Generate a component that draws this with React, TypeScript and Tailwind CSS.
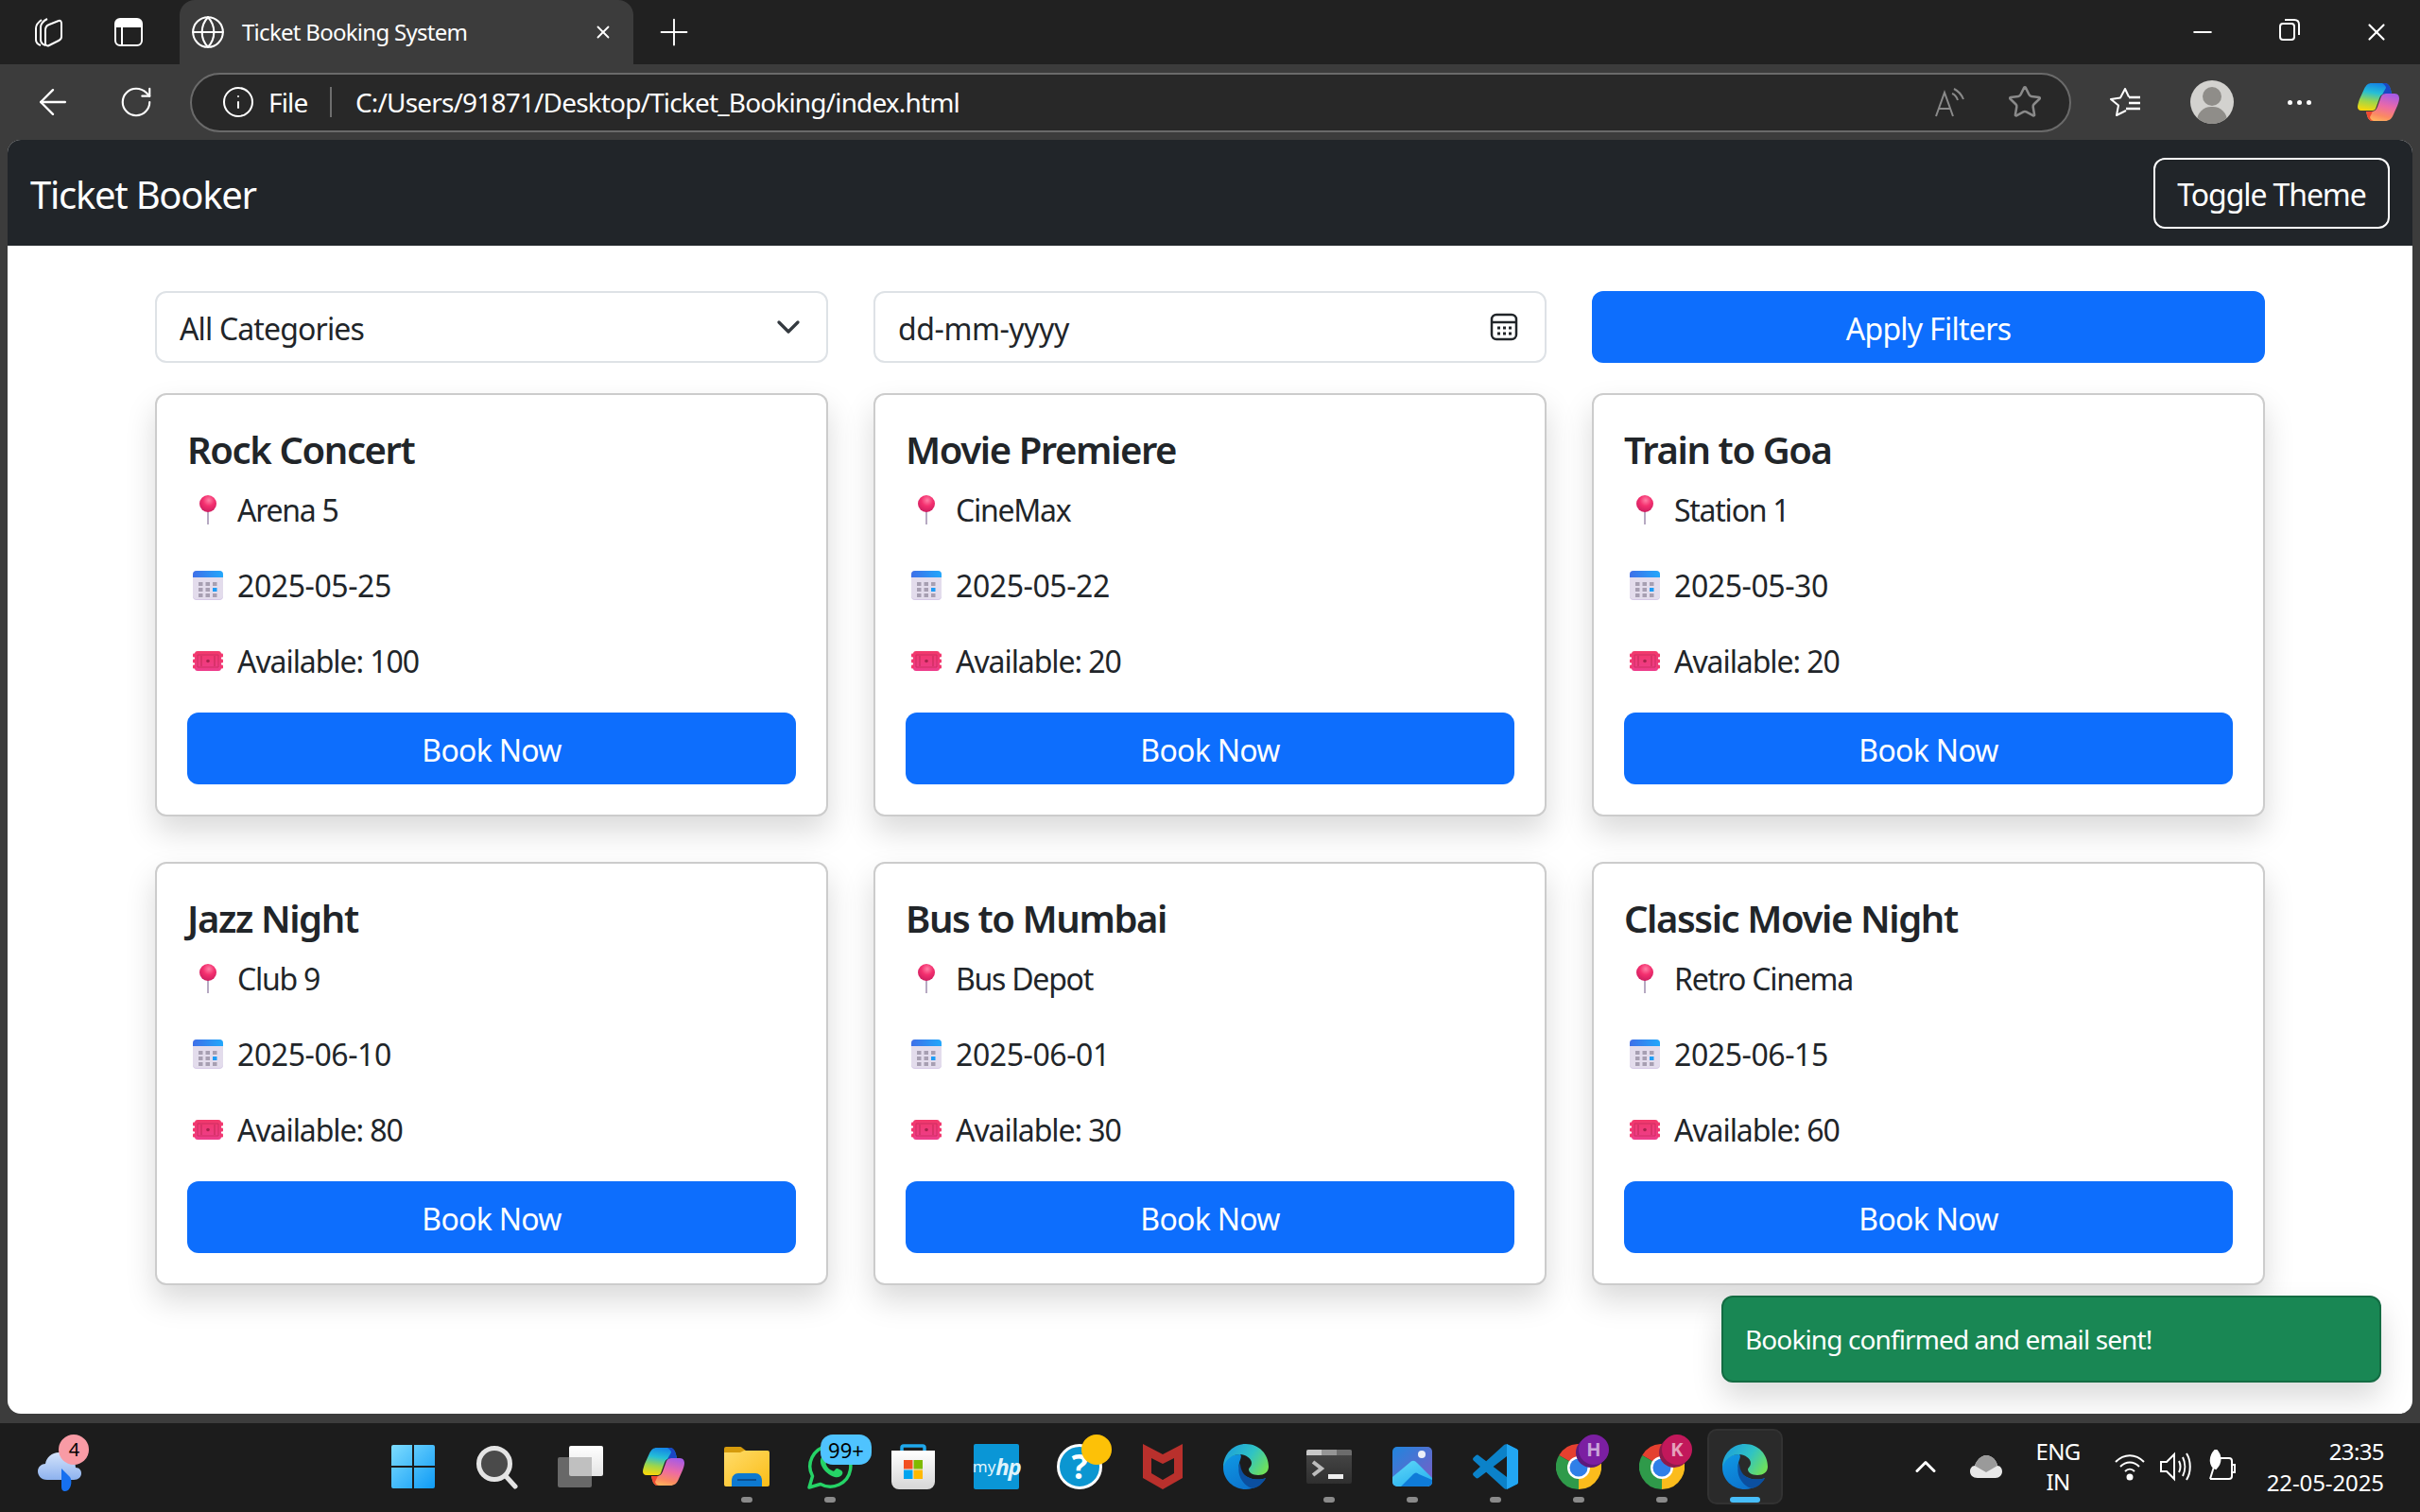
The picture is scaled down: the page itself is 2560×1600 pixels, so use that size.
import React from 'react';
import { Globe, Plus, RotateCw, Info, Star, ChevronDown, ChevronUp, ArrowLeft, X, Minus } from 'lucide-react';

interface EventItem {
  title: string;
  place: string;
  date: string;
  seats: number;
}

const events: EventItem[] = [
  { title: 'Rock Concert', place: 'Arena 5', date: '2025-05-25', seats: 100 },
  { title: 'Movie Premiere', place: 'CineMax', date: '2025-05-22', seats: 20 },
  { title: 'Train to Goa', place: 'Station 1', date: '2025-05-30', seats: 20 },
  { title: 'Jazz Night', place: 'Club 9', date: '2025-06-10', seats: 80 },
  { title: 'Bus to Mumbai', place: 'Bus Depot', date: '2025-06-01', seats: 30 },
  { title: 'Classic Movie Night', place: 'Retro Cinema', date: '2025-06-15', seats: 60 },
];

// emoji drawings, same box as the text line
const PinEmoji = () => (
  <svg width="44" height="44" viewBox="0 0 44 44">
    <defs>
      <radialGradient id="pinBall" cx="0.55" cy="0.3" r="0.75">
        <stop offset="0" stopColor="#ff7fa6" />
        <stop offset="0.45" stopColor="#f4306f" />
        <stop offset="1" stopColor="#c81b5e" />
      </radialGradient>
    </defs>
    <rect x="21" y="24" width="2" height="15" fill="#b6a9c2" />
    <circle cx="22" cy="17" r="9" fill="url(#pinBall)" />
  </svg>
);

const CalendarEmoji = () => (
  <svg width="44" height="44" viewBox="0 0 44 44">
    <defs>
      <linearGradient id="calTop" x1="0" x2="1" y1="0" y2="0">
        <stop offset="0" stopColor="#3f6fe8" />
        <stop offset="1" stopColor="#22a8fb" />
      </linearGradient>
    </defs>
    <rect x="6" y="8" width="32" height="31" rx="4" fill="#d5c8e6" />
    <rect x="6" y="12" width="32" height="26" rx="4" fill="#e3dcec" />
    <path d="M6 15V12a4 4 0 0 1 4-4h24a4 4 0 0 1 4 4v3z" fill="url(#calTop)" />
    {[20, 26, 32].map((y) =>
      [12, 19.5, 27].map((x) => (
        <rect key={`${x}-${y}`} x={x} y={y} width="4.5" height="4" fill={x === 27 && y === 26 ? '#1f9cf5' : '#a79fb2'} />
      )),
    )}
  </svg>
);

const TicketEmoji = () => (
  <svg width="44" height="44" viewBox="0 0 44 44">
    <defs>
      <linearGradient id="tick" x1="0" x2="0" y1="0" y2="1">
        <stop offset="0" stopColor="#f2386a" />
        <stop offset="1" stopColor="#ee3d8c" />
      </linearGradient>
    </defs>
    <rect x="8" y="13" width="28" height="21" rx="3" fill="url(#tick)" />
    {[15.5, 21.5, 27.5].map((y) => (
      <React.Fragment key={y}>
        <rect x="6" y={y} width="3" height="4" rx="1" fill="#f2386f" />
        <rect x="35" y={y} width="3" height="4" rx="1" fill="#f2386f" />
      </React.Fragment>
    ))}
    <path d="M11 17h22v13H11z" fill="none" stroke="#cf2f63" strokeWidth="1" />
    <path d="M15 18v11M29 18v11" stroke="#cf2f63" strokeWidth="1.4" />
    <circle cx="22" cy="23.5" r="1.8" fill="#a8234e" />
  </svg>
);

const CopilotLogo = ({ id }: { id: string }) => (
  <svg width="44" height="40" viewBox="0 0 44 40">
    <defs>
      <linearGradient id={`${id}a`} x1="0.55" y1="0" x2="0.35" y2="1">
        <stop offset="0" stopColor="#1484e6" />
        <stop offset="0.35" stopColor="#25bfd6" />
        <stop offset="0.68" stopColor="#9ed64a" />
        <stop offset="1" stopColor="#f6d80c" />
      </linearGradient>
      <linearGradient id={`${id}b`} x1="0.65" y1="0" x2="0.35" y2="1">
        <stop offset="0" stopColor="#a85be4" />
        <stop offset="0.45" stopColor="#ec6aa6" />
        <stop offset="0.8" stopColor="#fb8a62" />
        <stop offset="1" stopColor="#ffb25e" />
      </linearGradient>
    </defs>
    <path d="M15 0H29C32 0 34 3 35 7L36 11H30C26 11 24 13 23 16L19 27C18 29 16 29 14 29H4C1 29 0 27 0 25C0 23 1 20 2 17L7 6C9 2 11 0 15 0Z" fill={`url(#${id}a)`} />
    <path d="M26 0H29C32 0 34 3 35 7L36 11H30C28 11 27 11 26 12L30 5C30 3 28 1 26 0Z" fill="#1a46c4" />
    <path d="M30 11H39C43 11 44 14 44 16C44 19 43 21 42 24L38 33C36 38 33 40 29 40H16C13 40 11 38 10 34L9 30H14C18 30 20 28 21 25L25 14C26 12 28 11 30 11Z" fill={`url(#${id}b)`} />
    <path d="M10 34L9 30H14C15 30 15.5 30 16 29.8L13 36C13.5 38 15 39.5 17 40H16C13 40 11 38 10 34Z" fill="#ef4a32" />
  </svg>
);

const EdgeLogo = ({ id }: { id: string }) => (
  <svg width="48" height="48" viewBox="0 0 48 48">
    <defs>
      <linearGradient id={`${id}a`} x1="0" y1="0.2" x2="1" y2="0.7">
        <stop offset="0" stopColor="#1b9ddc" />
        <stop offset="0.55" stopColor="#30c3c4" />
        <stop offset="1" stopColor="#6fe05a" />
      </linearGradient>
      <linearGradient id={`${id}b`} x1="0" y1="0" x2="0.6" y2="1">
        <stop offset="0" stopColor="#0f99e4" />
        <stop offset="1" stopColor="#0c72cc" />
      </linearGradient>
    </defs>
    <path d="M18 11C8 11 0 17 0 25C0 38 11 48 24 48C33 48 41 43 45 36C40 38 33 38 28 36C20 33 15 27 17 20C18 16 20 13 18 11Z" fill={`url(#${id}b)`} />
    <path d="M18 20C13 30 20 44 31 47C37 46 42 42 45 36C40 38 33 38 28 36C22 34 18 28 18 20Z" fill="#0b4f9f" />
    <path d="M0 25C0 10 11 0 24 0C38 0 48 11 48 24C48 30 43 33 37 33C31 33 27 30 27 27C27 25 30 24 30 20C30 15 23 11 18 11C9 11 2 17 0 25Z" fill={`url(#${id}a)`} />
  </svg>
);

const ChromeLogo = ({ letter, badge }: { letter: string; badge: string }) => (
  <span className="relative flex items-center justify-center w-[48px] h-[48px]">
    <svg width="48" height="48" viewBox="0 0 48 48">
      <path d="M3.2 12A24 24 0 0 1 44.8 12H24V24Z" fill="#e5402f" />
      <path d="M3.2 12A24 24 0 0 0 24 48V24Z" fill="#2f9a4a" />
      <path d="M44.8 12A24 24 0 0 1 24 48V24Z" fill="#fbbc1c" />
      <circle cx="24" cy="25" r="12" fill="#fff" />
      <circle cx="24" cy="25" r="9.5" fill="#2f7fe8" />
    </svg>
    <span className={`absolute -top-[10px] -right-[8px] w-[32px] h-[32px] rounded-full flex items-center justify-center text-[20px] font-bold text-white/60 tracking-normal ${badge}`}>
      {letter}
    </span>
  </span>
);

const TaskSlot = ({ children, dot, active }: { children: React.ReactNode; dot?: boolean; active?: boolean }) => (
  <div className={`relative h-[80px] flex items-center justify-center ${active ? 'w-[80px] mx-[4px] rounded-[10px] bg-[#2a2a2a] border-2 border-[#323232]' : 'w-[88px]'}`}>
    {children}
    {dot && (
      <span
        className={
          active
            ? 'absolute bottom-0 w-[32px] h-[6px] rounded-full bg-[#47bdfa]'
            : 'absolute bottom-[2px] w-[12px] h-[6px] rounded-full bg-[#8a8a8a]'
        }
      />
    )}
  </div>
);

const Taskbar = () => (
  <div className="h-[94px] pb-[2px] bg-[#1c1c1c] flex items-center text-white relative">
    <div className="w-[392px] h-full shrink-0 flex items-center">
      <div className="relative ml-[38px] mt-[2px]">
        <svg width="52" height="50" viewBox="0 0 52 50">
          <defs>
            <linearGradient id="wx" x1="0" y1="0" x2="0" y2="1">
              <stop offset="0" stopColor="#d4e3fb" />
              <stop offset="1" stopColor="#8db2ee" />
            </linearGradient>
          </defs>
          <path d="M12 38C5 38 2 33 2 29c0-5 4-8 8-8 1-7 7-12 14-12 9 0 18 6 18 16 4 0 6 3 6 6 0 4-3 7-8 7z" fill="url(#wx)" />
          <path d="M27 26l9 9c3 4 1 15-5 15-3 0-4-2-4-5z" fill="#1670f0" />
        </svg>
        <span className="absolute -top-[10px] left-[24px] w-[32px] h-[32px] rounded-full bg-[#f89ba5] text-black text-[20px] flex items-center justify-center">4</span>
      </div>
    </div>

    <div className="relative w-[90px] h-[80px] flex items-center justify-center">
      <svg width="46" height="46" viewBox="0 0 46 46">
        <defs>
          <linearGradient id="win" x1="0" y1="0" x2="1" y2="1">
            <stop offset="0" stopColor="#7ddcff" />
            <stop offset="1" stopColor="#0f9bf5" />
          </linearGradient>
        </defs>
        <path d="M2 0h20v22H0V2a2 2 0 0 1 2-2zM24 0h20a2 2 0 0 1 2 2v20H24zM0 24h22v22H2a2 2 0 0 1-2-2zM24 24h22v20a2 2 0 0 1-2 2H24z" fill="url(#win)" />
      </svg>
    </div>
    <TaskSlot>
      <svg width="48" height="48" viewBox="0 0 48 48">
        <circle cx="21" cy="21" r="16.5" fill="#4a4a4a" stroke="#e4e4e4" strokeWidth="5" />
        <path d="M33 34l10 11" stroke="#e4e4e4" strokeWidth="5" strokeLinecap="round" />
      </svg>
    </TaskSlot>
    <TaskSlot>
      <svg width="48" height="44" viewBox="0 0 48 44">
        <defs>
          <linearGradient id="tvA" x1="0" y1="0" x2="0" y2="1">
            <stop offset="0" stopColor="#ffffff" />
            <stop offset="1" stopColor="#e4e4e4" />
          </linearGradient>
        </defs>
        <rect x="12" y="0" width="36" height="32" rx="2" fill="url(#tvA)" />
        <rect x="0" y="12" width="36" height="32" rx="2" fill="#686868" />
        <path d="M12 12h24v20H14a2 2 0 0 1-2-2z" fill="#c0c0c0" />
      </svg>
    </TaskSlot>
    <TaskSlot>
      <CopilotLogo id="cop2" />
    </TaskSlot>
    <TaskSlot dot>
      <svg width="48" height="42" viewBox="0 0 48 42">
        <defs>
          <linearGradient id="fold" x1="0" y1="0" x2="1" y2="1">
            <stop offset="0" stopColor="#ffdc6a" />
            <stop offset="1" stopColor="#fbbd18" />
          </linearGradient>
        </defs>
        <path d="M0 2a2 2 0 0 1 2-2h15a3 3 0 0 1 2 1l4 3v6H0z" fill="#d69b0c" />
        <path d="M0 6h17l4-2h25a2 2 0 0 1 2 2v34a2 2 0 0 1-2 2H2a2 2 0 0 1-2-2z" fill="url(#fold)" />
        <path d="M8 42V36c0-5 3-8 7-8h18c4 0 7 3 7 8v6z" fill="#0d79d0" />
        <rect x="14" y="34" width="20" height="2" fill="#0a4f90" />
      </svg>
    </TaskSlot>
    <TaskSlot dot>
      <span className="relative flex">
        <svg width="48" height="48" viewBox="0 0 48 48" fill="none">
          <path d="M2 46l3.5-12A21.5 21.5 0 1 1 14 42.5z" stroke="#25d366" strokeWidth="3.5" strokeLinejoin="round" />
          <path d="M16 13c-2 2-3 5-1 10 3 6 8 10 14 12 4 1 7-1 8-3 1-2 0-3-1-4l-4-2c-1 0-2 0-3 2-1 1-2 1-3 0-3-1-5-4-6-6-1-1 0-2 1-3s1-2 0-3l-2-4c-1-1-2-1-3 1z" fill="#25d366" />
        </svg>
        <span className="absolute -top-[10px] left-[14px] w-[54px] h-[32px] rounded-[13px] bg-[#4fc3ff] text-black text-[22px] flex items-center justify-center tracking-normal">99+</span>
      </span>
    </TaskSlot>
    <TaskSlot>
      <svg width="46" height="48" viewBox="0 0 46 48">
        <defs>
          <linearGradient id="stBag" x1="0" y1="0" x2="0" y2="1">
            <stop offset="0" stopColor="#ffffff" />
            <stop offset="1" stopColor="#d6d6d6" />
          </linearGradient>
        </defs>
        <path d="M11 10V4c0-1.500 .5-2 2-2h20c1.500 0 2 .5 2 2v6" stroke="#1fa8ec" strokeWidth="3.5" fill="none" />
        <path d="M0 7h46v33a8 8 0 0 1-8 8H8a8 8 0 0 1-8-8z" fill="url(#stBag)" />
        <rect x="13" y="17" width="9.500" height="9.500" fill="#f25022" />
        <rect x="23.500" y="17" width="9.500" height="9.500" fill="#7fba00" />
        <rect x="13" y="27.500" width="9.500" height="9.500" fill="#00a4ef" />
        <rect x="23.500" y="27.500" width="9.500" height="9.500" fill="#ffb900" />
      </svg>
    </TaskSlot>
    <TaskSlot>
      <div className="w-[48px] h-[48px] rounded-[2px] bg-[#0a96d6] flex items-center justify-center text-[#dff3fb] text-[17px] tracking-normal">
        my<span className="font-bold italic text-[24px] leading-none tracking-[-0.06em]">hp</span>
      </div>
    </TaskSlot>
    <TaskSlot>
      <span className="relative flex">
        <span className="w-[48px] h-[48px] rounded-full bg-[#0b96d1] border-[3px] border-white flex items-center justify-center text-white font-bold text-[36px] tracking-normal">?</span>
        <span className="absolute -top-[10px] -right-[10px] w-[32px] h-[32px] rounded-full bg-[#fdc107]" />
      </span>
    </TaskSlot>
    <TaskSlot>
      <svg width="42" height="48" viewBox="0 0 42 48">
        <path d="M0 0l21 11L42 0v36L21 48 0 36z" fill="#b9302c" />
        <path d="M9 15l12 6 12-6v16l-12 7-12-7z" fill="#1c1c1c" />
      </svg>
    </TaskSlot>
    <TaskSlot>
      <EdgeLogo id="edgeA" />
    </TaskSlot>
    <TaskSlot dot>
      <svg width="48" height="36" viewBox="0 0 48 36">
        <defs>
          <linearGradient id="term" x1="0" y1="0" x2="0" y2="1">
            <stop offset="0" stopColor="#484848" />
            <stop offset="1" stopColor="#2f2f2f" />
          </linearGradient>
        </defs>
        <rect width="48" height="36" rx="2" fill="url(#term)" />
        <path d="M0 2a2 2 0 0 1 2-2h14v6H0z" fill="#c8c8c8" />
        <rect x="16" width="16" height="6" fill="#959595" />
        <path d="M32 0h14a2 2 0 0 1 2 2v4H32z" fill="#6c6c6c" />
        <path d="M7 13l9 7-9 7" stroke="#bdbdbd" strokeWidth="4" fill="none" />
        <rect x="23" y="26" width="16" height="5" fill="#eeeeee" />
      </svg>
    </TaskSlot>
    <TaskSlot dot>
      <svg width="42" height="42" viewBox="0 0 42 42">
        <defs>
          <linearGradient id="ph" x1="0" y1="0" x2="1" y2="1">
            <stop offset="0" stopColor="#1f86de" />
            <stop offset="1" stopColor="#7f5cc4" />
          </linearGradient>
          <linearGradient id="phPeak" x1="0" y1="0" x2="0.6" y2="1">
            <stop offset="0" stopColor="#60d8f8" />
            <stop offset="1" stopColor="#2cb4f0" />
          </linearGradient>
        </defs>
        <rect width="42" height="42" rx="5" fill="url(#ph)" />
        <circle cx="31" cy="8" r="4" fill="#ecf0f8" />
        <path d="M0 32L18 17c3-3 5-3 8 0l16 16v4a5 5 0 0 1-5 5H5a5 5 0 0 1-5-5z" fill="url(#phPeak)" />
        <path d="M9 42l13-13c2-2 4-2 6 0l14 6v2a5 5 0 0 1-5 5z" fill="#0f7bd8" />
      </svg>
    </TaskSlot>
    <TaskSlot dot>
      <svg width="48" height="48" viewBox="0 0 100 100">
        <path
          fillRule="evenodd"
          d="M70.900 99.300c1.600.6 3.400.6 5-.2l20.600-9.900c2.200-1 3.500-3.200 3.500-5.600V16.400c0-2.400-1.400-4.600-3.500-5.600L75.900.9c-2-1-4.500-.8-6.300.5-.3.2-.5.4-.7.6L29.500 38 12.300 25c-1.600-1.200-3.800-1.100-5.300.2L1.500 30.400c-1.800 1.700-1.800 4.500 0 6.200L16.400 50 1.500 63.400c-1.800 1.700-1.800 4.500 0 6.200L7 74.800c1.500 1.300 3.700 1.400 5.300.2l17.200-13 39.400 36c.6.6 1.300 1 2 1.300zM75 27.300 45.100 50 75 72.700z"
          fill="#0b82c9"
        />
        <path d="M75 0l21.500 10.800c2.100 1 3.500 3.200 3.500 5.600v67.200c0 2.400-1.400 4.600-3.500 5.600L75 100z" fill="#22a6f2" />
      </svg>
    </TaskSlot>
    <TaskSlot dot>
      <ChromeLogo letter="H" badge="bg-[#7b1fa2] shadow-[-3px_3px_0_#5c1a7c]" />
    </TaskSlot>
    <TaskSlot dot>
      <ChromeLogo letter="K" badge="bg-[#c2185b] shadow-[-3px_3px_0_#8e1a4c]" />
    </TaskSlot>
    <TaskSlot dot active>
      <EdgeLogo id="edgeB" />
    </TaskSlot>

    <div className="ml-[129px] flex items-center">
      <ChevronUp size={36} strokeWidth={2} className="text-white" />
      <span className="ml-[29px] flex">
        <svg width="34" height="24" viewBox="0 0 34 24">
          <path d="M8 24c-5 0-8-3-8-7 0-3 2-6 5-6 2-6 7-11 12-11 6 0 11 5 12 11 3 0 5 3 5 6 0 4-3 7-7 7z" fill="#e8e8e8" />
          <path d="M5 11c2-6 7-11 12-11 6 0 11 5 12 11l-12 7z" fill="#9a9a9a" />
        </svg>
      </span>
      <div className="ml-[21px] w-[76px] text-center text-[24px] leading-[32px] tracking-[-0.03em]">
        <div>ENG</div>
        <div>IN</div>
      </div>
      <svg className="ml-[21px]" width="34" height="34" viewBox="0 0 34 34" fill="none" stroke="#fff" strokeWidth="2">
        <path d="M2 12c9-9 21-9 30 0M7 17c6-6 14-6 20 0M12 22c3-3 7-3 10 0" />
        <circle cx="17" cy="28" r="2.5" fill="#fff" />
      </svg>
      <svg className="ml-[14px]" width="34" height="36" viewBox="0 0 34 36" fill="none" stroke="#fff" strokeWidth="2">
        <path d="M2 13h6l8-8v26l-8-8H2z" />
        <path d="M21 12c2 4 2 8 0 12M25 8c3 6 3 14 0 20M29 4c5 8 5 20 0 28" />
      </svg>
      <svg className="ml-[14px]" width="34" height="36" viewBox="0 0 34 36" fill="none" stroke="#fff" strokeWidth="2">
        <path d="M14 9h12a3 3 0 0 1 3 3v16a3 3 0 0 1-3 3H6" />
        <path d="M29 16h3v8h-3" />
        <path d="M12 0c6 6 6 14 0 20-6-2-8-12 0-20zM10 18l-4 13" fill="#fff" />
      </svg>
      <div className="ml-[30px] w-[126px] text-right text-[24px] leading-[33px]">
        <div className="tracking-[-0.6px]">23:35</div>
        <div className="tracking-[-0.1px]">22-05-2025</div>
      </div>
    </div>
  </div>
);

const BrowserChrome = () => (
  <>
    <div className="h-[68px] bg-[#212121] flex items-center text-white shrink-0">
      <div className="ml-[10px] w-[84px] flex justify-center">
        <svg width="34" height="34" viewBox="0 0 34 34" fill="none" stroke="#fff" strokeWidth="2">
          <path d="M9 4C6 6 3 9 3 13v12c0 3 2 5 5 6" />
          <path d="M15 3c-4 2-7 5-7 9v13c0 3 2 5 5 6" />
          <path d="M27 5L17 9c-3 1-4 3-4 6v14c0 2 2 3 4 2l10-5c2-1 3-2 3-4V8c0-2-1-4-3-3z" />
        </svg>
      </div>
      <div className="w-[84px] flex justify-center">
        <svg width="30" height="30" viewBox="0 0 30 30" fill="none">
          <rect x="1" y="1" width="28" height="28" rx="5" stroke="#fff" strokeWidth="2" />
          <path d="M1 6a5 5 0 0 1 5-5h18a5 5 0 0 1 5 5v4H1z" fill="#fff" />
          <path d="M8 10v19" stroke="#fff" strokeWidth="2" />
        </svg>
      </div>
      <div className="ml-[12px] w-[480px] h-full rounded-t-[16px] bg-[#3c3c3c] flex items-center pl-[11px] pr-[21px]">
        <Globe size={38} strokeWidth={1.3} />
        <span className="ml-[17px] text-[24px] tracking-[-0.03em]">Ticket Booking System</span>
        <X size={22} strokeWidth={2} className="ml-auto" />
      </div>
      <Plus size={46} strokeWidth={1} className="ml-[20px]" />
      <div className="ml-auto flex">
        <div className="w-[92px] flex justify-center">
          <Minus size={30} strokeWidth={1.75} />
        </div>
        <div className="w-[92px] flex justify-center">
          <svg width="22" height="24" viewBox="0 0 22 24" fill="none" stroke="#fff" strokeWidth="2">
            <rect x="1" y="6" width="15" height="17" rx="3" />
            <path d="M6 2h10c3 0 5 2 5 5v11" />
          </svg>
        </div>
        <div className="w-[92px] flex justify-center">
          <X size={30} strokeWidth={1.75} />
        </div>
      </div>
    </div>

    <div className="h-[80px] bg-[#3c3c3c] flex items-center text-white shrink-0">
      <div className="ml-[12px] w-[88px] flex justify-center">
        <ArrowLeft size={44} strokeWidth={1.3} />
      </div>
      <div className="w-[88px] flex justify-center">
        <RotateCw size={38} strokeWidth={1.35} />
      </div>
      <div className="ml-[13px] w-[1990px] h-[63px] rounded-full border-2 border-[#6a6a6a] bg-[#282828] flex items-center pl-[31px] pr-[8px]">
        <Info size={36} strokeWidth={1.35} />
        <span className="ml-[14px] w-[65px] text-[28px] tracking-[-0.03em]">File</span>
        <span className="w-[2px] h-[32px] bg-[#6e6e6e]" />
        <span className="ml-[25px] text-[28px] tracking-[-0.03em]">C:/Users/91871/Desktop/Ticket_Booking/index.html</span>
        <div className="ml-auto w-[79px] flex justify-center text-[#8a8a8a]">
          <svg width="32" height="34" viewBox="0 0 32 34" fill="none" stroke="currentColor" strokeWidth="2">
            <path d="M1 32L10 7l9 25M4 24h12" />
            <path d="M18 8c3 1 5 4 6 7M20 3c4 2 8 6 10 11" />
          </svg>
        </div>
        <div className="w-[79px] flex justify-center text-[#8a8a8a]">
          <Star size={38} strokeWidth={1.6} />
        </div>
      </div>
      <div className="ml-[11px] w-[92px] flex justify-center">
        <svg width="33" height="30" viewBox="0 0 33 30" fill="none" stroke="#fff" strokeWidth="2" strokeLinejoin="round">
          <path d="M17 24L7 29L9 18.500L1 12L11 10.500L16 1L20 9.500" />
          <path d="M20 10h12M20 16h12M17 22h15" strokeWidth="2.500" />
        </svg>
      </div>
      <div className="w-[92px] flex justify-center">
        <span className="relative w-[46px] h-[46px] rounded-full bg-[#d3d2cf] overflow-hidden block">
          <span className="absolute left-[13px] top-[7px] w-[20px] h-[20px] rounded-full bg-[#8f8d89]" />
          <span className="absolute left-[7px] top-[28px] w-[32px] h-[30px] rounded-full bg-[#8f8d89]" />
        </span>
      </div>
      <div className="w-[92px] flex justify-center gap-[5px]">
        <span className="w-[5px] h-[5px] rounded-full bg-white" />
        <span className="w-[5px] h-[5px] rounded-full bg-white" />
        <span className="w-[5px] h-[5px] rounded-full bg-white" />
      </div>
      <div className="w-[76px] flex justify-center">
        <CopilotLogo id="cop1" />
      </div>
    </div>
  </>
);

const EventCard = ({ item }: { item: EventItem }) => (
  <div className="border-2 border-black/20 rounded-[12px] bg-white p-[32px] shadow-[0_16px_32px_rgba(0,0,0,0.15)]">
    <h5 className="text-[40px] leading-[48px] font-semibold pt-[2px] mb-[14px] tracking-[-1.4px]">{item.title}</h5>
    <div className="flex items-center h-[48px] mb-[32px]">
      <PinEmoji />
      <span className="ml-[9px] pt-[4px] tracking-[-1.25px]">{item.place}</span>
    </div>
    <div className="flex items-center h-[48px] mb-[32px]">
      <CalendarEmoji />
      <span className="ml-[9px] pt-[4px] tracking-[-0.42px]">{item.date}</span>
    </div>
    <div className="flex items-center h-[48px] mb-[32px]">
      <TicketEmoji />
      <span className="ml-[9px] pt-[4px] tracking-[-1.07px]">Available: {item.seats}</span>
    </div>
    <button className="w-full h-[76px] pt-[4px] rounded-[12px] bg-[#0d6efd] text-white">Book Now</button>
  </div>
);

export default function App() {
  return (
    <div className="w-[2560px] h-[1600px] flex flex-col bg-[#3c3c3c] overflow-hidden font-['Noto_Sans',sans-serif] tracking-[-0.72px]">
      <BrowserChrome />

      <div className="relative mx-[8px] h-[1348px] shrink-0 rounded-[14px] overflow-hidden bg-white text-[#212529] text-[32px] leading-[48px]">
        <nav className="h-[112px] bg-[#212529] flex items-center justify-between px-[24px] text-white">
          <span className="text-[40px] pt-[4px] tracking-[-1.27px]">Ticket Booker</span>
          <button className="w-[250px] h-[75px] pt-[4px] rounded-[12px] border-2 border-white tracking-[-1.1px]">Toggle Theme</button>
        </nav>

        <div className="w-[2232px] mx-auto pt-[48px]">
          <div className="grid grid-cols-3 gap-x-[48px]">
            <div className="h-[76px] rounded-[12px] border-2 border-[#dee2e6] flex items-center justify-between pl-[24px] pr-[20px]">
              <span className="pt-[4px] tracking-[-0.85px]">All Categories</span>
              <ChevronDown size={40} strokeWidth={2} className="text-[#343a40]" />
            </div>
            <div className="h-[76px] rounded-[12px] border-2 border-[#dee2e6] flex items-center justify-between pl-[24px] pr-[28px]">
              <span className="pt-[4px] tracking-[-0.42px]">dd-mm-yyyy</span>
              <svg width="30" height="30" viewBox="0 0 30 30" fill="none" stroke="#212529" strokeWidth="2.500">
                <rect x="2" y="2" width="26" height="26" rx="5" />
                <path d="M2 10h26" />
                <path d="M8 16h3M14 16h3M20 16h3M8 22h3M14 22h3M20 22h3" strokeWidth="3" />
              </svg>
            </div>
            <button className="h-[76px] pt-[4px] rounded-[12px] bg-[#0d6efd] text-white">Apply Filters</button>
          </div>

          <div className="grid grid-cols-3 gap-x-[48px] gap-y-[48px] mt-[32px]">
            {events.map((item) => (
              <EventCard key={item.title} item={item} />
            ))}
          </div>
        </div>

        <div className="absolute left-[1813px] top-[1223px] w-[698px] h-[92px] rounded-[12px] bg-[#198754] border-2 border-black/20 text-white text-[28px] tracking-[-0.89px] flex items-center pl-[23px] shadow-[0_16px_32px_rgba(0,0,0,0.15)]">
          Booking confirmed and email sent!
        </div>
      </div>

      <div className="h-[10px] shrink-0" />
      <Taskbar />
    </div>
  );
}
